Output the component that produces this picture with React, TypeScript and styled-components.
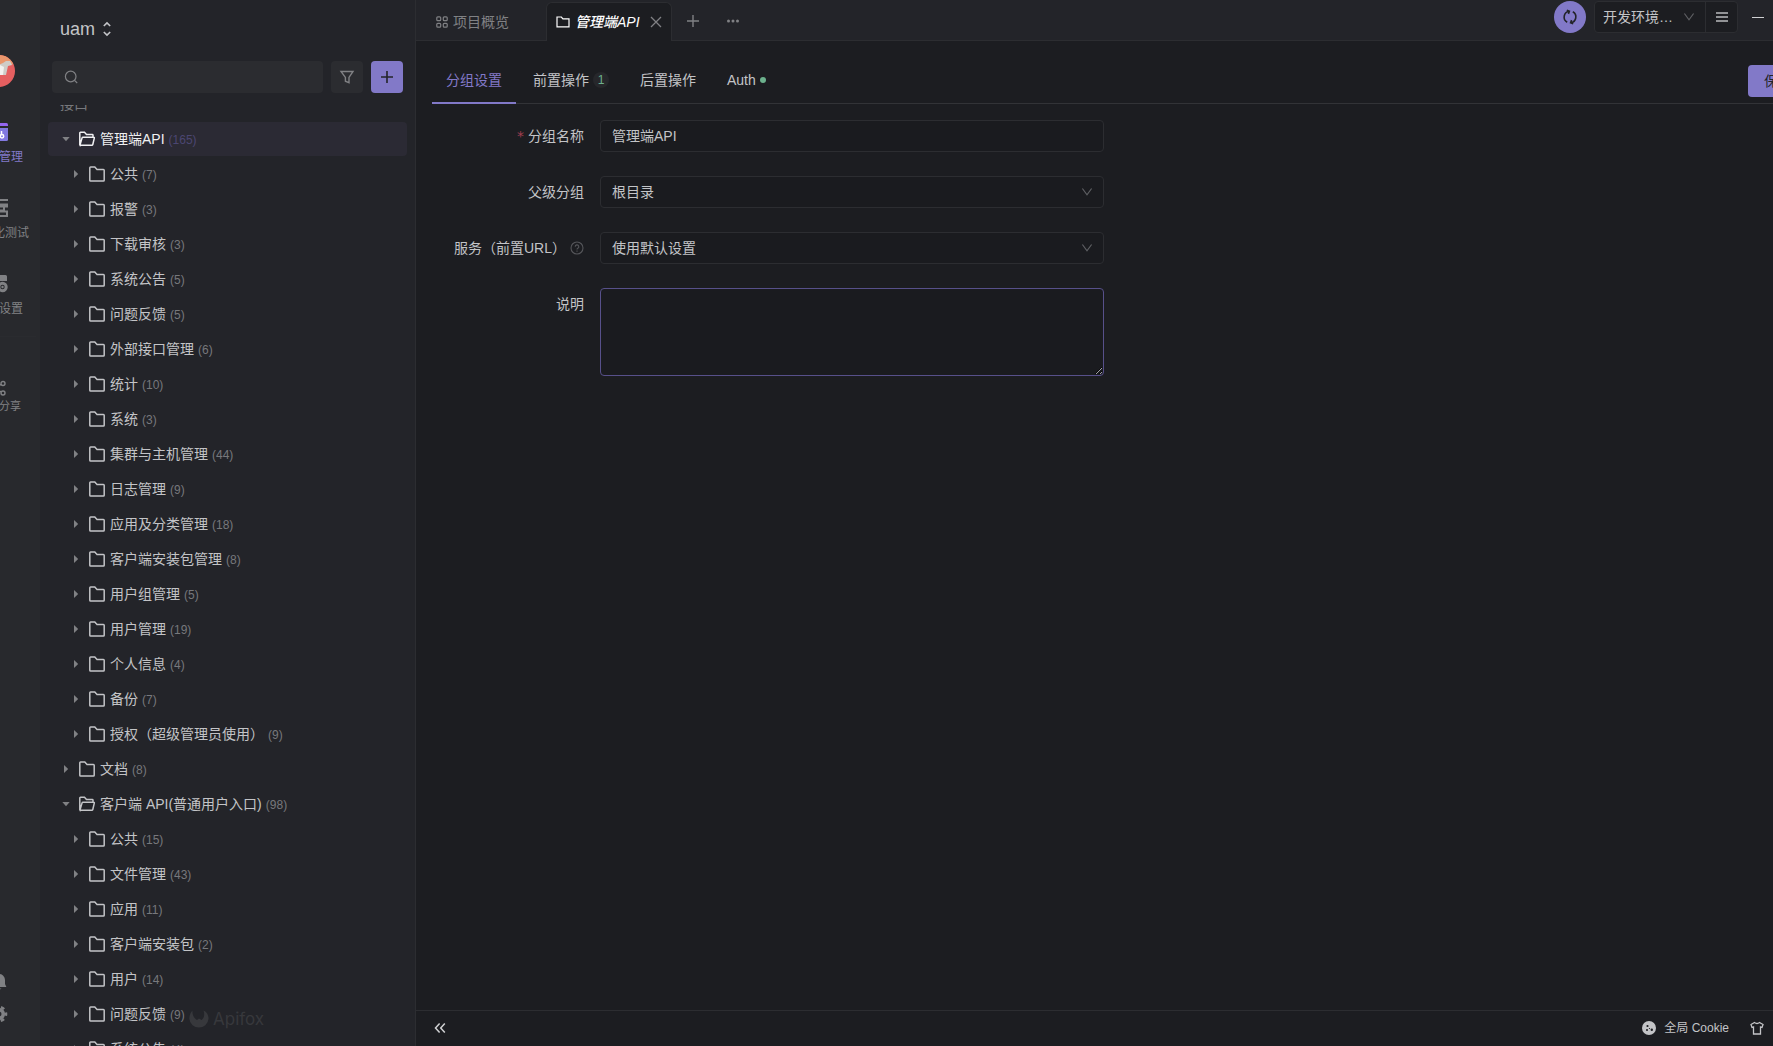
import React, { useLayoutEffect, useRef } from 'react';
import styled, { createGlobalStyle, css } from 'styled-components';

const c = {
  rail: '#28292d',
  side: '#232429',
  main: '#1c1d21',
  line: '#2c2d31',
  field: '#1a1b1f',
  text: '#c3c4c7',
  muted: '#77787c',
  icon: '#808184',
  accent: '#8279c8',
  green: '#6cb18d',
};

const Global = createGlobalStyle`
  *, *::before, *::after { box-sizing: border-box; }
  body {
    margin: 0;
    background: ${c.main};
    color: ${c.text};
    font: 14px/22px "Liberation Sans", "Noto Sans CJK SC", sans-serif;
    overflow: hidden;
  }
  button, input, select, textarea { font: inherit; color: inherit; margin: 0; }
  button { border: 0; padding: 0; background: none; cursor: pointer; }
  svg { display: block; flex: none; }
`;

const Shell = styled.div`
  display: flex;
  height: 100vh;
  overflow: hidden;
`;

/* ---------- navigation rail ---------- */
const Rail = styled.nav`
  flex: none;
  width: 82px;
  margin-left: -42px;
  padding: 55px 0 23px;
  display: flex;
  flex-direction: column;
  align-items: center;
  background: ${c.rail};
  color: ${c.icon};
`;
const Avatar = styled.svg`
  margin-bottom: 35px;
`;
const RailItem = styled.button<{ $active?: boolean }>`
  display: flex;
  flex-direction: column;
  align-items: center;
  gap: 6px;
  height: 76px;
  padding-top: 1px;
  font-size: 12px;
  line-height: 20px;
  color: ${(p) => (p.$active ? c.accent : c.icon)};
`;
const RailRule = styled.hr`
  width: 74px;
  height: 1px;
  margin: -14px 0 42px;
  border: 0;
  background: #2a2b2f;
  flex: none;
`;
const ShareItem = styled(RailItem)`
  gap: 0;
  font-size: 11px;
  height: 40px;
`;
const RailFoot = styled.div`
  margin-top: auto;
  display: flex;
  flex-direction: column;
  gap: 14px;
`;

/* ---------- sidebar ---------- */
const Sidebar = styled.aside`
  position: relative;
  flex: none;
  width: 376px;
  display: flex;
  flex-direction: column;
  background: ${c.side};
  border-right: 1px solid ${c.line};
`;
const Project = styled.button`
  display: flex;
  align-items: center;
  gap: 7px;
  align-self: flex-start;
  height: 61px;
  padding: 0 20px 3px;
  font-size: 18px;
`;
const SearchRow = styled.div`
  display: flex;
  gap: 8px;
  padding: 0 12px 12px;
`;
const SearchBox = styled.label`
  flex: 1;
  display: flex;
  align-items: center;
  gap: 8px;
  height: 32px;
  padding: 0 12px;
  border-radius: 4px;
  background: #2b2c30;
  color: ${c.icon};
`;
const SearchInput = styled.input`
  flex: 1;
  min-width: 0;
  border: 0;
  outline: 0;
  background: none;
`;
const SquareButton = styled.button<{ $primary?: boolean }>`
  display: grid;
  place-items: center;
  width: 32px;
  height: 32px;
  border-radius: 4px;
  background: ${(p) => (p.$primary ? c.accent : '#2b2c30')};
  color: ${(p) => (p.$primary ? '#232429' : c.icon)};
`;
const TreeScroll = styled.div`
  flex: 1;
  min-height: 0;
  overflow-y: auto;
  scrollbar-width: none;
  padding: 0 8px;
`;
const Tree = styled.ul`
  list-style: none;
  margin: 0;
  padding: 0;
  display: flex;
  flex-direction: column;
  gap: 1px;
`;
const TreeHeading = styled.li`
  height: 34px;
  padding: 0 12px;
  line-height: 34px;
  color: ${c.muted};
`;
const Row = styled.button<{ $level: number; $selected?: boolean }>`
  display: flex;
  align-items: center;
  gap: 4px;
  width: 100%;
  height: 34px;
  padding-left: ${(p) => 10 + p.$level * 10}px;
  border-radius: 4px;
  white-space: nowrap;
  color: ${(p) => (p.$selected ? '#f0f0f2' : c.text)};
  background: ${(p) => (p.$selected ? '#2b2a34' : 'transparent')};
`;
const RowLabel = styled.span`
  display: flex;
  align-items: baseline;
  gap: 4px;
`;
const Count = styled.span<{ $selected?: boolean }>`
  font-size: 12px;
  color: ${(p) => (p.$selected ? '#4b4672' : c.muted)};
`;
const Watermark = styled.div`
  position: absolute;
  left: 149px;
  bottom: 16px;
  display: flex;
  align-items: center;
  gap: 4px;
  color: #37383c;
  font: 17px/22px Inter, sans-serif;
  pointer-events: none;
`;

/* ---------- main ---------- */
const Main = styled.main`
  flex: 1;
  min-width: 0;
  display: flex;
  flex-direction: column;
  overflow: hidden;
  background: ${c.main};
`;
const TopBar = styled.header`
  display: flex;
  align-items: flex-end;
  height: 41px;
  background: ${c.side};
  box-shadow: inset 0 -1px ${c.line};
`;
const Tab = styled.div<{ $active?: boolean }>`
  display: flex;
  align-items: center;
  gap: 7px;
  height: 39px;
  color: ${c.icon};
  width: 130px;
  padding: 0 20px;
  ${(p) =>
    p.$active &&
    css`
      width: 126px;
      padding: 0 9px;
      color: #fff;
      background: ${c.main};
      border: 1px solid ${c.line};
      border-bottom: 0;
      border-radius: 6px 6px 0 0;
    `}
`;
const TabName = styled.button<{ $active?: boolean }>`
  display: flex;
  align-items: center;
  gap: 5px;
  white-space: nowrap;
  font-style: ${(p) => (p.$active ? 'italic' : 'normal')};
  font-weight: ${(p) => (p.$active ? 500 : 400)};
`;
const IconButton = styled.button`
  display: grid;
  place-items: center;
  color: ${c.icon};
`;
const TabTools = styled.div`
  display: flex;
  padding-left: 1px;
`;
const TabTool = styled(IconButton)`
  width: 40px;
  height: 40px;
`;
const TopRight = styled.div`
  margin-left: auto;
  align-self: flex-start;
  display: flex;
  align-items: center;
  gap: 8px;
  padding: 1px 9px 0 0;
`;
const SyncButton = styled.button`
  display: grid;
  place-items: center;
  width: 32px;
  height: 32px;
  border-radius: 50%;
  background: ${c.accent};
  color: #232429;
`;
const EnvGroup = styled.div`
  display: flex;
  height: 32px;
  border: 1px solid ${c.line};
  border-radius: 4px;
  background: ${c.main};
`;
const EnvMenu = styled(IconButton)`
  width: 32px;
  border-left: 1px solid ${c.line};
  color: #b9babd;
`;
const Minimise = styled(IconButton)`
  width: 18px;
  height: 32px;
  padding-left: 6px;
  color: #d0d1d3;
`;
const SelectWrap = styled.div`
  display: grid;
  align-items: center;
  color: #5e5f63;
  > * { grid-area: 1 / 1; }
  > svg { justify-self: end; margin-right: 11px; pointer-events: none; }
`;
const EnvWrap = styled(SelectWrap)`
  width: 110px;
  > svg { margin-right: 10px; }
`;
const EnvSelect = styled.select`
  appearance: none;
  width: 100%;
  height: 100%;
  padding: 0 8px;
  border: 0;
  outline: 0;
  background: none;
  color: ${c.text};
`;

const SubTabs = styled.div`
  display: flex;
  align-items: stretch;
  gap: 3px;
  height: 47px;
  margin: 16px -35px 0 16px;
  box-shadow: inset 0 -1px #323337;
`;
const SubTab = styled.button<{ $active?: boolean }>`
  display: flex;
  align-items: center;
  gap: 4px;
  padding: 0 14px;
  border-bottom: 2px solid ${(p) => (p.$active ? c.accent : 'transparent')};
  color: ${(p) => (p.$active ? c.accent : c.text)};
  white-space: nowrap;
`;
const Badge = styled.span`
  width: 16px;
  height: 16px;
  border-radius: 8px;
  background: #26272b;
  color: ${c.green};
  font-size: 12px;
  line-height: 16px;
  text-align: center;
`;
const Dot = styled.span`
  width: 6px;
  height: 6px;
  border-radius: 3px;
  background: ${c.green};
`;
const SaveButton = styled.button`
  align-self: center;
  flex: none;
  width: 60px;
  height: 32px;
  margin: 0 0 0 auto;
  border-radius: 4px;
  background: ${c.accent};
  color: #232429;
`;

const Form = styled.form`
  flex: 1;
  display: flex;
  flex-direction: column;
  gap: 24px;
  max-width: 704px;
  padding: 16px;
`;
const Field = styled.div`
  display: grid;
  grid-template-columns: 1fr 3fr;
  align-items: start;
`;
const Label = styled.label`
  display: flex;
  align-items: center;
  justify-content: flex-end;
  height: 32px;
  padding-right: 16px;
  white-space: nowrap;
`;
const Star = styled.span`
  margin-right: 4px;
  color: #a13d50;
  font-family: "DejaVu Sans", sans-serif;
`;
const Help = styled.span`
  margin-left: 4px;
  color: #55565a;
`;
const control = css`
  width: 100%;
  height: 32px;
  padding: 0 11px;
  border: 1px solid ${c.line};
  border-radius: 4px;
  outline: 0;
  background: ${c.field};
  color: ${c.text};
`;
const TextInput = styled.input`
  ${control}
  padding-bottom: 2px;
`;
const Select = styled.select`
  ${control}
  appearance: none;
`;
const TextArea = styled.textarea`
  ${control}
  display: block;
  height: 88px;
  padding: 4px 11px;
  border-color: #57508a;
  resize: vertical;
`;

const Footer = styled.footer`
  display: flex;
  align-items: center;
  height: 36px;
  padding: 0 9px 2px 18px;
  border-top: 1px solid ${c.line};
  font-size: 12px;
`;
const FootButton = styled.button`
  display: flex;
  align-items: center;
  gap: 8px;
`;
const FootRight = styled.div`
  margin-left: auto;
  display: flex;
  gap: 21px;
`;

/* ---------- icons ---------- */
const Svg = ({ s = 16, w = 1.5, children }: { s?: number; w?: number; children: React.ReactNode }) => (
  <svg width={s} height={s} viewBox={`0 0 ${s} ${s}`} fill="none" stroke="currentColor" strokeWidth={w} aria-hidden="true">
    {children}
  </svg>
);
const Folder = () => (
  <Svg s={18}><path d="M1.8 15.2V2.8q0-.8.8-.8h4.2l2.2 2.4h6.4q.8 0 .8.8v10q0 .8-.8.8H2.6q-.8 0-.8-.8z" /></Svg>
);
const FolderOpen = () => (
  <Svg s={18}><path d="M1.8 15V3q0-.7.7-.7h4l2 2.2h5.8q.7 0 .7.7v2.100M2 15l2-6.900q.2-.8 1-.8h10.700q.8 0 .6.8l-1.500 6.400q-.2.800-1 .8H2.500q-.7 0-.7-.7z" /></Svg>
);
const FolderSmall = () => (
  <Svg s={14} w={1.2}><path d="M1 11.400V2h4.400l1.500 1.800H13v8H1z" /></Svg>
);
const Caret = ({ open }: { open?: boolean }) => (
  <svg width="16" height="16" viewBox="0 0 16 16" fill={c.icon} aria-hidden="true">
    {open ? <path d="M4.300 6h7.400L8 10.200z" /> : <path d="M6 4v8L10.200 8z" />}
  </svg>
);
const Chevron = () => (
  <svg width="12" height="10" viewBox="0 0 12 10" fill="none" stroke="currentColor" strokeWidth="1.2" aria-hidden="true">
    <path d="M1.4 1.5 6 7.8l4.6-6.3" />
  </svg>
);

type Node = { name: string; count: number; level: number; open?: boolean; selected?: boolean };
const n = (name: string, count: number, level = 1): Node => ({ name, count, level });
const nodes: Node[] = [
  { name: '管理端API', count: 165, level: 0, open: true, selected: true },
  n('公共', 7), n('报警', 3), n('下载审核', 3), n('系统公告', 5), n('问题反馈', 5),
  n('外部接口管理', 6), n('统计', 10), n('系统', 3), n('集群与主机管理', 44), n('日志管理', 9),
  n('应用及分类管理', 18), n('客户端安装包管理', 8), n('用户组管理', 5), n('用户管理', 19),
  n('个人信息', 4), n('备份', 7), n('授权（超级管理员使用）', 9),
  n('文档', 8, 0),
  { name: '客户端 API(普通用户入口)', count: 98, level: 0, open: true },
  n('公共', 15), n('文件管理', 43), n('应用', 11), n('客户端安装包', 2), n('用户', 14),
  n('问题反馈', 9), n('系统公告', 4),
];

export default function App() {
  const scroller = useRef<HTMLDivElement>(null);
  useLayoutEffect(() => {
    if (scroller.current) scroller.current.scrollTop = 18;
  }, []);

  return (
    <Shell>
      <Global />
      <Rail>
        <Avatar width="32" height="32" viewBox="0 0 32 32" aria-hidden="true">
          <defs>
            <clipPath id="avatar"><circle cx="16" cy="16" r="16" /></clipPath>
          </defs>
          <g clipPath="url(#avatar)">
            <path d="M0 0h32v32H0z" fill="#e55f60" />
            <path d="M0 0h32v9L16 12 0 14z" fill="#ea966c" />
            <path d="M8 20l4-9 8-3 3-2h4l2 4-4 1-2 9z" fill="#cfccc8" />
            <path d="M17 10l4 2-1 8h-5z" fill="#f3f1ef" />
          </g>
        </Avatar>
        <RailItem $active>
          <svg width="18" height="18" viewBox="0 0 18 18" aria-hidden="true">
            <path d="M1.5 0h15Q18 0 18 1.5V3H0V1.5Q0 0 1.5 0z" fill="#9466f0" />
            <path d="M0 5h18v11.500q0 1.500-1.500 1.500h-15Q0 18 0 16.500z" fill="#8279e0" />
            <path d="M8 9l-3 3 3 3M11.500 8v3.500" fill="none" stroke="#fff" strokeWidth="1.5" />
            <circle cx="12" cy="13.2" r="1.7" fill="none" stroke="#fff" strokeWidth="1.5" />
          </svg>
          接口管理
        </RailItem>
        <RailItem>
          <svg width="18" height="18" viewBox="0 0 18 18" fill="none" stroke="currentColor" strokeWidth="2" aria-hidden="true">
            <path d="M18 1H3v4.500h15M1 7.500h13v4H1zM14 7.500h4M18 12.500H5V17h13M17 12v5" />
          </svg>
          自动化测试
        </RailItem>
        <RailItem>
          <svg width="18" height="18" viewBox="0 0 18 18" aria-hidden="true">
            <path d="M1.500 0h14Q17 0 17 1.500V6H0V1.500Q0 0 1.500 0zM0 7.500h7a6 6 0 0 0 0 9H1.500Q0 16.500 0 15z" fill="currentColor" />
            <circle cx="12.500" cy="12" r="3.700" fill="none" stroke="currentColor" strokeWidth="3" />
            <circle cx="12.500" cy="12" r="1.200" fill="currentColor" />
          </svg>
          项目设置
        </RailItem>
        <RailRule />
        <ShareItem>
          <Svg s={16} w={1.4}>
            <circle cx="3.500" cy="8" r="2" /><circle cx="12" cy="3.500" r="2" /><circle cx="12" cy="13" r="2" />
            <path d="M5.300 7l5-2.600M5.300 9l5 3" />
          </Svg>
          邀请分享
        </ShareItem>
        <RailFoot>
          <IconButton aria-label="通知">
            <svg width="16" height="18" viewBox="0 0 16 18" fill="currentColor" aria-hidden="true">
              <path d="M8 1a6 6 0 0 1 6 6v4l1.400 3H.6L2 11V7a6 6 0 0 1 6-6zM5.500 15.500h5L8 17.200z" />
            </svg>
          </IconButton>
          <IconButton aria-label="设置">
            <svg width="18" height="18" viewBox="0 0 18 18" fill="none" stroke="currentColor" aria-hidden="true">
              <circle cx="9" cy="9" r="4.300" strokeWidth="3.600" />
              <circle cx="9" cy="9" r="7" strokeWidth="2.600" strokeDasharray="3.660 3.660" strokeDashoffset="1.830" />
            </svg>
          </IconButton>
        </RailFoot>
      </Rail>

      <Sidebar>
        <Project>
          uam
          <svg width="10" height="16" viewBox="0 0 10 16" fill="none" stroke="currentColor" strokeWidth="1.6" aria-hidden="true">
            <path d="M1.800 5 5 1.900 8.200 5M1.800 11 5 14.100 8.200 11" />
          </svg>
        </Project>
        <SearchRow>
          <SearchBox>
            <Svg s={14} w={1.2}><circle cx="6.700" cy="6.500" r="5.300" /><path d="M10.500 10.300l2.700 2.700" /></Svg>
            <SearchInput type="text" aria-label="搜索" />
          </SearchBox>
          <SquareButton aria-label="筛选">
            <Svg s={16} w={1.4}><path d="M2 2.500h12L10 8.400v5.300l-3.600-1.500V8.400z" /></Svg>
          </SquareButton>
          <SquareButton $primary aria-label="新建">
            <Svg s={16} w={1.6}><path d="M2 8h12M8 2v12" /></Svg>
          </SquareButton>
        </SearchRow>
        <TreeScroll ref={scroller}>
          <Tree>
            <TreeHeading>接口</TreeHeading>
            {nodes.map((d, i) => (
              <li key={i}>
                <Row $level={d.level} $selected={d.selected}>
                  <Caret open={d.open} />
                  {d.open ? <FolderOpen /> : <Folder />}
                  <RowLabel>
                    {d.name}
                    <Count $selected={d.selected}>({d.count})</Count>
                  </RowLabel>
                </Row>
              </li>
            ))}
          </Tree>
        </TreeScroll>
        <Watermark>
          <svg width="20" height="20" viewBox="0 0 20 20" fill="currentColor" aria-hidden="true">
            <path d="M3.500 1.500C3 6 5 9 8 11l2-1.500L12.500 11C15 9 16 6 14.500 1.500 18 3 19.800 6.500 19.500 10A9.600 9.600 0 0 1 .4 10C.3 6.500 1.500 3.500 3.500 1.500z" />
          </svg>
          Apifox
        </Watermark>
      </Sidebar>

      <Main>
        <TopBar>
          <Tab>
            <TabName>
              <Svg s={12} w={1.2}>
                <rect x=".8" y=".8" width="3.900" height="3.900" rx="1" /><rect x="7.300" y=".8" width="3.900" height="3.900" rx="1" />
                <rect x=".8" y="7.300" width="3.900" height="3.900" rx="1" /><rect x="7.300" y="7.300" width="3.900" height="3.900" rx="1" />
              </Svg>
              项目概览
            </TabName>
          </Tab>
          <Tab $active>
            <TabName $active><FolderSmall />管理端API</TabName>
            <IconButton aria-label="关闭">
              <Svg s={18} w={1.3}><path d="M4 4l10 10M14 4L4 14" /></Svg>
            </IconButton>
          </Tab>
          <TabTools>
            <TabTool aria-label="新建标签">
              <Svg s={14} w={1.4}><path d="M1 7h12M7 1v12" /></Svg>
            </TabTool>
            <TabTool aria-label="更多">
              <svg width="14" height="4" viewBox="0 0 14 4" fill="currentColor" aria-hidden="true">
                <circle cx="2.500" cy="2" r="1.500" /><circle cx="7" cy="2" r="1.500" /><circle cx="11.500" cy="2" r="1.500" />
              </svg>
            </TabTool>
          </TabTools>
          <TopRight>
            <SyncButton aria-label="同步">
              <Svg s={16} w={1.6}>
                <path d="M5.200 13.200A5.900 5.900 0 0 1 7.200 2.200M10.800 2.800a5.900 5.900 0 0 1-2 11M4.800 1.300l2.600.9-1 2.700M11.200 14.700l-2.600-.9 1-2.700" />
              </Svg>
            </SyncButton>
            <EnvGroup>
              <EnvWrap>
                <EnvSelect aria-label="环境"><option>开发环境…</option></EnvSelect>
                <Chevron />
              </EnvWrap>
              <EnvMenu aria-label="菜单">
                <Svg s={12} w={1.6}><path d="M0 2h12M0 6h12M0 10h12" /></Svg>
              </EnvMenu>
            </EnvGroup>
            <Minimise aria-label="最小化">
              <Svg s={12} w={1}><path d="M0 6.500h12" /></Svg>
            </Minimise>
          </TopRight>
        </TopBar>

        <SubTabs>
          <SubTab $active>分组设置</SubTab>
          <SubTab>前置操作<Badge>1</Badge></SubTab>
          <SubTab>后置操作</SubTab>
          <SubTab>Auth<Dot /></SubTab>
          <SaveButton>保存</SaveButton>
        </SubTabs>

        <Form>
          <Field>
            <Label htmlFor="name"><Star>*</Star>分组名称</Label>
            <TextInput id="name" defaultValue="管理端API" />
          </Field>
          <Field>
            <Label htmlFor="parent">父级分组</Label>
            <SelectWrap>
              <Select id="parent"><option>根目录</option></Select>
              <Chevron />
            </SelectWrap>
          </Field>
          <Field>
            <Label htmlFor="service">
              服务（前置URL）
              <Help>
                <Svg s={14} w={1.1}>
                  <circle cx="7" cy="7" r="6" />
                  <path d="M5.200 5.700a1.800 1.800 0 1 1 2.600 1.600q-.8.400-.8 1.100M7 9.500v1.200" />
                </Svg>
              </Help>
            </Label>
            <SelectWrap>
              <Select id="service"><option>使用默认设置</option></Select>
              <Chevron />
            </SelectWrap>
          </Field>
          <Field>
            <Label htmlFor="desc">说明</Label>
            <TextArea id="desc" />
          </Field>
        </Form>

        <Footer>
          <IconButton aria-label="收起">
            <svg width="12" height="12" viewBox="0 0 12 12" fill="none" stroke="#d0d1d3" strokeWidth="1.5" aria-hidden="true">
              <path d="M5.600 1.500 1.500 6l4.100 4.500M10.800 1.500 6.700 6l4.100 4.500" />
            </svg>
          </IconButton>
          <FootRight>
            <FootButton>
              <svg width="14" height="14" viewBox="0 0 14 14" aria-hidden="true">
                <circle cx="7" cy="7" r="7" fill="#c3c4c7" />
                <g fill={c.main}><circle cx="5.500" cy="5" r="1.100" /><circle cx="5" cy="9" r="1" /><circle cx="9.800" cy="8.800" r="1.200" /><circle cx="7.500" cy="7.500" r=".6" /></g>
              </svg>
              全局 Cookie
            </FootButton>
            <FootButton aria-label="主题">
              <Svg s={14} w={1.3}>
                <path d="M4.500 1.500q2.500 2 5 0l3.500 2-1 3-1.500-.5v7h-7V6L2 6.500l-1-3z" />
              </Svg>
            </FootButton>
          </FootRight>
        </Footer>
      </Main>
    </Shell>
  );
}
